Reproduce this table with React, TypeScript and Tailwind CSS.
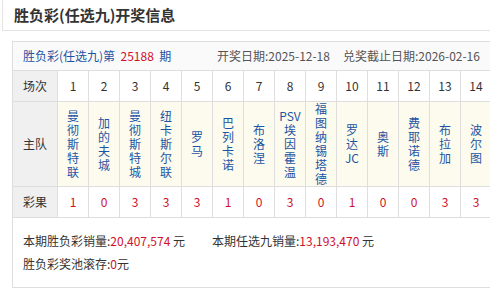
import React from "react";

const teams: string[][] = [
  ["曼", "彻", "斯", "特", "联"],
  ["加", "的", "夫", "城"],
  ["曼", "彻", "斯", "特", "城"],
  ["纽", "卡", "斯", "尔", "联"],
  ["罗", "马"],
  ["巴", "列", "卡", "诺"],
  ["布", "洛", "涅"],
  ["PSV", "埃", "因", "霍", "温"],
  ["福", "图", "纳", "锡", "塔", "德"],
  ["罗", "达", "JC"],
  ["奥", "斯"],
  ["费", "耶", "诺", "德"],
  ["布", "拉", "加"],
  ["波", "尔", "图"],
];

const results = ["1", "0", "3", "3", "3", "1", "0", "3", "0", "1", "0", "0", "3", "3"];

export default function App() {
  return (
    <div className="w-[490px] h-[288px] overflow-hidden bg-white text-[#333] font-['Noto_Sans_CJK_SC','Noto_Sans',sans-serif]">
      <div className="ml-[2px] w-[520px] h-[31px] border-l border-b border-[#e3e3e3] pl-[11px] flex items-center text-[15px] font-bold text-[#333]">
        胜负彩(任选九)开奖信息
      </div>
      <div className="ml-[12px] mt-[10px] w-[520px] border border-[#dedede]">
        <div className="h-[29px] bg-[#fafafa] border-b border-[#dedede] flex items-center pl-[10px] text-[12px]">
          <span className="w-[194px] text-[#1c54a4]">
            胜负彩(任选九)第&nbsp;&nbsp;<span className="text-[#d0102a]">25188</span>&nbsp;&nbsp;期
          </span>
          <span className="w-[126px] text-[#555]">开奖日期:2025-12-18</span>
          <span className="text-[#555]">兑奖截止日期:2026-02-16</span>
        </div>
        <div className="flex h-[31px] border-b border-[#dedede] text-[12px]">
          <div className="w-[45px] shrink-0 border-r border-[#dedede] bg-[#f0f0f0] flex items-center justify-center">场次</div>
          {teams.map((_, i) => (
            <div key={i} className="w-[31px] shrink-0 border-r border-[#dedede] flex items-center justify-center">
              {i + 1}
            </div>
          ))}
        </div>
        <div className="flex h-[85px] border-b border-[#dedede] text-[12px]">
          <div className="w-[45px] shrink-0 border-r border-[#dedede] bg-[#f0f0f0] flex items-center justify-center">主队</div>
          {teams.map((t, i) => (
            <div key={i} className="w-[31px] shrink-0 border-r border-[#dedede] bg-[#fcfbee] flex flex-col items-center [justify-content:safe_center] overflow-hidden text-[#1c54a4] leading-[14px]">
              {t.map((c, j) => (
                <div key={j} className="shrink-0">{c}</div>
              ))}
            </div>
          ))}
        </div>
        <div className="flex h-[31px] border-b border-[#dedede] text-[12px]">
          <div className="w-[45px] shrink-0 border-r border-[#dedede] bg-[#f0f0f0] flex items-center justify-center">彩果</div>
          {results.map((r, i) => (
            <div key={i} className="w-[31px] shrink-0 border-r border-[#dedede] flex items-center justify-center text-[#d0102a]">
              {r}
            </div>
          ))}
        </div>
        <div className="h-[69px] pl-[10px] pt-[11px] text-[12px] leading-[23px]">
          <div className="flex">
            <span className="w-[189px]">
              本期胜负彩销量:<span className="text-[#d0102a]">20,407,574</span> 元
            </span>
            <span>
              本期任选九销量:<span className="text-[#d0102a]">13,193,470</span> 元
            </span>
          </div>
          <div>
            胜负彩奖池滚存:<span className="text-[#d0102a]">0</span>元
          </div>
        </div>
      </div>
    </div>
  );
}
